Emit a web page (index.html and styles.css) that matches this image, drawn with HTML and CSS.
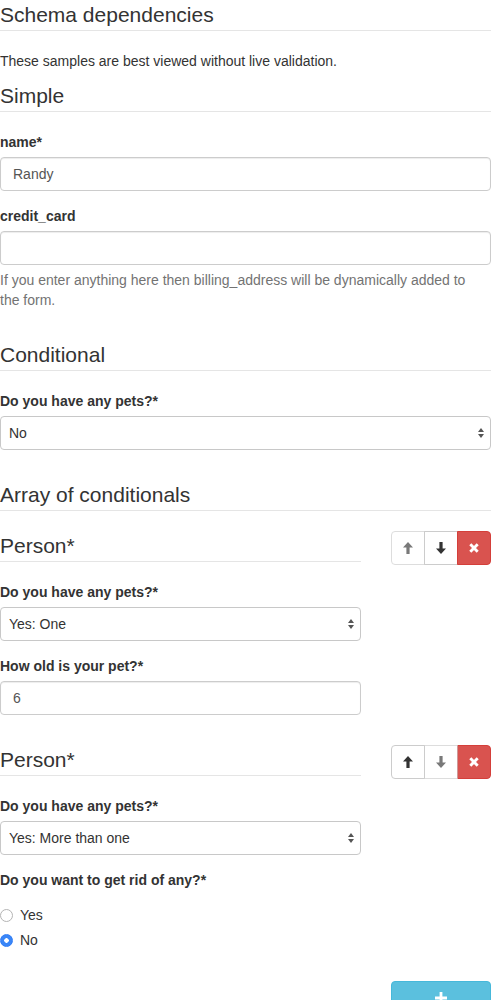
FILE: index.html
```html
<!DOCTYPE html>
<html lang="en">
<head>
<meta charset="utf-8">
<title>Schema dependencies</title>
<link rel="stylesheet" href="styles.css">
</head>
<body>
<form class="rjsf">
  <div class="form-group">
    <fieldset>
      <legend>Schema dependencies</legend>
      <p class="field-description">These samples are best viewed without live validation.</p>

      <div class="form-group">
        <fieldset>
          <legend>Simple</legend>
          <div class="form-group">
            <label class="control-label">name*</label>
            <input class="form-control" type="text" value="Randy">
          </div>
          <div class="form-group">
            <label class="control-label">credit_card</label>
            <input class="form-control" type="text" value="">
            <p class="help-block">If you enter anything here then billing_address will be dynamically added to the form.</p>
          </div>
        </fieldset>
      </div>

      <div class="form-group">
        <fieldset>
          <legend>Conditional</legend>
          <div class="form-group">
            <label class="control-label">Do you have any pets?*</label>
            <div class="select-wrap">
              <select class="form-control select"><option>No</option></select>
              <svg class="select-arrows" width="6" height="10" viewBox="0 0 6 10"><path d="M3 0 L6 4 H0 Z M0 6 H6 L3 10 Z" fill="#555"/></svg>
            </div>
          </div>
        </fieldset>
      </div>

      <div class="form-group">
        <fieldset>
          <legend>Array of conditionals</legend>
          <div class="array-item-list">

            <div class="array-item">
              <div class="col-main">
                <div class="form-group">
                  <fieldset>
                    <legend>Person*</legend>
                    <div class="form-group">
                      <label class="control-label">Do you have any pets?*</label>
                      <div class="select-wrap">
                        <select class="form-control select"><option>Yes: One</option></select>
                        <svg class="select-arrows" width="6" height="10" viewBox="0 0 6 10"><path d="M3 0 L6 4 H0 Z M0 6 H6 L3 10 Z" fill="#555"/></svg>
                      </div>
                    </div>
                    <div class="form-group">
                      <label class="control-label">How old is your pet?*</label>
                      <input class="form-control" type="number" value="6">
                    </div>
                  </fieldset>
                </div>
              </div>
              <div class="col-tools">
                <div class="btn-group">
                  <button type="button" class="btn btn-default btn-first" disabled>
                    <svg width="10" height="12" viewBox="0 0 10 12"><path d="M5 0 L10 5.6 H6.6 V12 H3.4 V5.6 H0 Z" fill="currentColor"/></svg>
                  </button>
                  <button type="button" class="btn btn-default btn-mid">
                    <svg width="10" height="12" viewBox="0 0 10 12"><path d="M5 12 L10 6.4 H6.6 V0 H3.4 V6.4 H0 Z" fill="currentColor"/></svg>
                  </button>
                  <button type="button" class="btn btn-danger btn-last">
                    <svg width="10" height="10" viewBox="0 0 10 10"><path d="M1.3 1.3 L8.7 8.7 M8.7 1.3 L1.3 8.7" stroke="#fff" stroke-width="2.9"/></svg>
                  </button>
                </div>
              </div>
            </div>

            <div class="array-item">
              <div class="col-main">
                <div class="form-group">
                  <fieldset>
                    <legend>Person*</legend>
                    <div class="form-group">
                      <label class="control-label">Do you have any pets?*</label>
                      <div class="select-wrap">
                        <select class="form-control select"><option>Yes: More than one</option></select>
                        <svg class="select-arrows" width="6" height="10" viewBox="0 0 6 10"><path d="M3 0 L6 4 H0 Z M0 6 H6 L3 10 Z" fill="#555"/></svg>
                      </div>
                    </div>
                    <div class="form-group">
                      <label class="control-label">Do you want to get rid of any?*</label>
                      <div class="field-radio-group">
                        <div class="radio">
                          <label><input type="radio" name="rid" value="yes"><span>Yes</span></label>
                        </div>
                        <div class="radio">
                          <label><input type="radio" name="rid" value="no" checked><span>No</span></label>
                        </div>
                      </div>
                    </div>
                  </fieldset>
                </div>
              </div>
              <div class="col-tools">
                <div class="btn-group">
                  <button type="button" class="btn btn-default btn-first">
                    <svg width="10" height="12" viewBox="0 0 10 12"><path d="M5 0 L10 5.6 H6.6 V12 H3.4 V5.6 H0 Z" fill="currentColor"/></svg>
                  </button>
                  <button type="button" class="btn btn-default btn-mid" disabled>
                    <svg width="10" height="12" viewBox="0 0 10 12"><path d="M5 12 L10 6.4 H6.6 V0 H3.4 V6.4 H0 Z" fill="currentColor"/></svg>
                  </button>
                  <button type="button" class="btn btn-danger btn-last">
                    <svg width="10" height="10" viewBox="0 0 10 10"><path d="M1.3 1.3 L8.7 8.7 M8.7 1.3 L1.3 8.7" stroke="#fff" stroke-width="2.9"/></svg>
                  </button>
                </div>
              </div>
            </div>

          </div>
          <div class="add-row">
            <p class="array-item-add">
              <button type="button" class="btn btn-info btn-add">
                <svg width="12" height="12" viewBox="0 0 12 12"><path d="M4.6 0 H7.4 V4.6 H12 V7.4 H7.4 V12 H4.6 V7.4 H0 V4.6 H4.6 Z" fill="#fff"/></svg>
              </button>
            </p>
          </div>
        </fieldset>
      </div>
    </fieldset>
  </div>
</form>
</body>
</html>
```

FILE: styles.css
```css
* {
  box-sizing: border-box;
}

html, body {
  margin: 0;
  padding: 0;
}

body {
  width: 491px;
  font-family: "Liberation Sans", Helvetica, Arial, sans-serif;
  font-size: 14px;
  line-height: 1.42857143;
  color: #333;
  background: #fff;
  overflow: hidden;
}

fieldset {
  margin: 0;
  padding: 0;
  border: 0;
  min-width: 0;
}

legend {
  display: block;
  width: 100%;
  padding: 0;
  margin-bottom: 20px;
  font-size: 21px;
  line-height: inherit;
  color: #333;
  border: 0;
  border-bottom: 1px solid #e5e5e5;
}

p {
  margin: 0 0 10px;
}

.form-group {
  margin-bottom: 15px;
}

.control-label {
  display: inline-block;
  max-width: 100%;
  margin-bottom: 5px;
  font-weight: 700;
}

.form-control {
  display: block;
  width: 100%;
  height: 34px;
  padding: 6px 12px;
  font-family: inherit;
  font-size: 14px;
  line-height: 1.42857143;
  color: #555;
  background: #fff;
  border: 1px solid #ccc;
  border-radius: 4px;
  box-shadow: inset 0 1px 1px rgba(0, 0, 0, 0.075);
  margin: 0;
}

input[type="number"] {
  -moz-appearance: textfield;
}

input[type="number"]::-webkit-inner-spin-button,
input[type="number"]::-webkit-outer-spin-button {
  -webkit-appearance: none;
  margin: 0;
}

.help-block {
  display: block;
  max-width: 478px;
  margin-top: 5px;
  margin-bottom: 10px;
  color: #737373;
}

.select-wrap {
  position: relative;
}

.select {
  -webkit-appearance: none;
  appearance: none;
  padding: 6px 24px 6px 8px;
  color: #333;
  box-shadow: none;
  border-color: #c8c8c8;
}

.select-arrows {
  position: absolute;
  right: 7px;
  top: 12px;
  pointer-events: none;
}

.array-item {
  display: flex;
  margin: 0 -15px;
}

.col-main {
  width: 75%;
  padding: 0 15px;
  display: flow-root;
}

.col-tools {
  width: 25%;
  padding: 0 15px;
  display: flow-root;
}

.btn-group {
  display: flex;
  justify-content: space-around;
}

.btn {
  display: inline-flex;
  align-items: center;
  justify-content: center;
  height: 34px;
  padding: 6px 6px;
  font-size: 14px;
  line-height: 1.42857143;
  font-weight: 700;
  border: 1px solid transparent;
  border-radius: 4px;
  cursor: pointer;
  margin: 0;
}

.btn-group .btn {
  flex: 1 1 0%;
}

.btn-group .btn + .btn {
  margin-left: -1px;
}

.btn-first {
  border-top-right-radius: 0;
  border-bottom-right-radius: 0;
}

.btn-mid {
  border-radius: 0;
}

.btn-last {
  border-top-left-radius: 0;
  border-bottom-left-radius: 0;
}

.btn-default {
  color: #333;
  background: #fff;
  border-color: #ccc;
}

.btn[disabled] {
  opacity: 0.65;
  cursor: not-allowed;
}

.btn-danger {
  color: #fff;
  background: #d9534f;
  border-color: #d43f3a;
}

.btn-info {
  color: #fff;
  background: #5bc0de;
  border-color: #46b8da;
}

.add-row {
  display: flex;
  justify-content: flex-end;
  margin: 0 -15px;
}

.array-item-add {
  width: 25%;
  padding: 1px 15px 0;
  text-align: right;
}

.btn-add {
  width: 100%;
}

.radio {
  display: block;
  margin-top: 10px;
  margin-bottom: 10px;
}

.radio + .radio {
  margin-top: -5px;
}

.radio label {
  display: flex;
  align-items: flex-start;
  min-height: 20px;
  font-weight: 400;
  cursor: pointer;
}

.radio input[type="radio"] {
  -webkit-appearance: none;
  appearance: none;
  flex: none;
  width: 13px;
  height: 13px;
  margin: 4px 7px 0 0;
  border: 1px solid #b4b4b4;
  border-radius: 50%;
  background: #fff;
}

.radio input[type="radio"]:checked {
  border-color: #2f7cf6;
  background: radial-gradient(circle, #fff 0 2px, #3a86f7 2.5px);
}
```
